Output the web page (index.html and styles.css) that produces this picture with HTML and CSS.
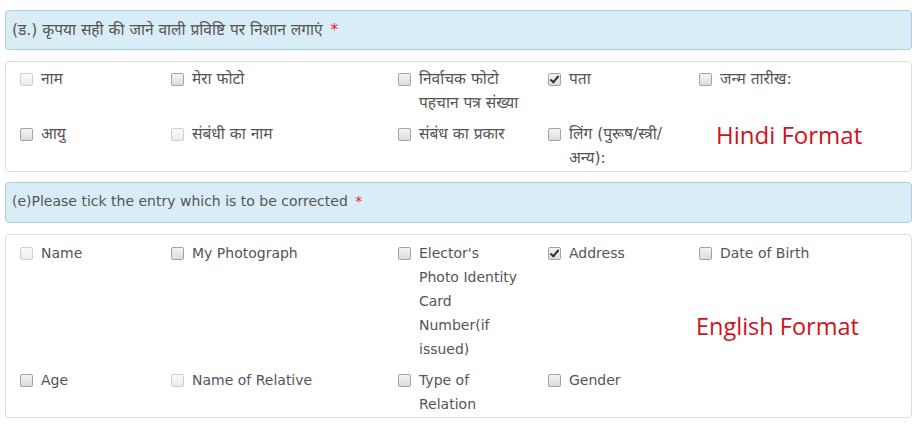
FILE: index.html
```html
<!DOCTYPE html>
<html lang="hi">

<head>
  <meta charset="UTF-8" />
  <meta name="viewport" content="width=device-width, initial-scale=1.0" />
  <title>प्रविष्टि सुधार</title>
  <link rel="stylesheet" href="styles.css">
</head>

<body>
  <div class="page">
    <div class="panel-heading">(ड.) कृपया सही की जाने वाली प्रविष्टि पर निशान लगाएं <span class="req">*</span></div>

    <div class="panel-body">
      <div class="grid">
        <label class="item"><span class="chk light"></span><span class="txt">नाम</span></label>
        <label class="item"><span class="chk"></span><span class="txt">मेरा फोटो</span></label>
        <label class="item narrow"><span class="chk"></span><span class="txt">निर्वाचक फोटो पहचान पत्र संख्या</span></label>
        <label class="item"><span class="chk on"></span><span class="txt">पता</span></label>
        <label class="item"><span class="chk"></span><span class="txt">जन्म तारीख:</span></label>

        <label class="item"><span class="chk"></span><span class="txt">आयु</span></label>
        <label class="item"><span class="chk light"></span><span class="txt">संबंधी का नाम</span></label>
        <label class="item"><span class="chk"></span><span class="txt">संबंध का प्रकार</span></label>
        <label class="item narrow"><span class="chk"></span><span class="txt">लिंग (पुरूष/स्त्री/ अन्य):</span></label>
      </div>
      <div class="note note-hi">Hindi Format</div>
    </div>

    <div class="panel-heading en">(e)Please tick the entry which is to be corrected <span class="req">*</span></div>

    <div class="panel-body en">
      <div class="grid">
        <label class="item"><span class="chk light"></span><span class="txt">Name</span></label>
        <label class="item"><span class="chk"></span><span class="txt">My Photograph</span></label>
        <label class="item narrow"><span class="chk"></span><span class="txt">Elector's Photo Identity Card Number(if issued)</span></label>
        <label class="item"><span class="chk on"></span><span class="txt">Address</span></label>
        <label class="item"><span class="chk"></span><span class="txt">Date of Birth</span></label>

        <label class="item"><span class="chk"></span><span class="txt">Age</span></label>
        <label class="item"><span class="chk light"></span><span class="txt">Name of Relative</span></label>
        <label class="item narrow"><span class="chk"></span><span class="txt">Type of Relation</span></label>
        <label class="item"><span class="chk"></span><span class="txt">Gender</span></label>
      </div>
      <div class="note note-en">English Format</div>
    </div>
  </div>
</body>

</html>
```

FILE: styles.css
```css
body {
  margin: 0;
  padding: 0;
  background: #fff;
  font-family: "DejaVu Sans", "Noto Sans Devanagari", "Noto Sans", sans-serif;
  font-size: 14px;
  color: #555;
}

.page {
  padding: 10px 7px 0 5px;
}

.panel-heading {
  height: 38px;
  line-height: 38px;
  padding: 0 6px;
  background: #d9edf7;
  border: 1px solid #a9d1e6;
  border-radius: 4px;
  font-size: 15.5px;
  color: #555;
  white-space: nowrap;
}

.panel-heading.en {
  height: 39px;
  line-height: 37px;
  font-size: 14px;
}

.req {
  color: #e4202a;
  margin-left: 3px;
}

.panel-body {
  position: relative;
  margin: 11px 0 10px;
  padding: 5px 15px 1px 14px;
  border: 1px solid #ddd;
  border-radius: 4px;
  height: 103px;
}

.panel-body.en {
  height: 175px;
  padding-top: 6px;
}

.grid {
  display: grid;
  grid-template-columns: 151px 227px 150px 151px 1fr;
  row-gap: 7px;
}

.item {
  display: flex;
  align-items: flex-start;
  line-height: 24px;
}

.panel-body:not(.en) .item {
  font-size: 15.5px;
}

.item.narrow .txt {
  max-width: 103px;
}

.chk {
  flex: none;
  width: 11px;
  height: 11px;
  margin: 6px 8px 0 0;
  border: 1px solid #a3a3a3;
  border-radius: 2px;
  background: linear-gradient(#f4f4f4, #dcdcdc);
  position: relative;
}

.chk.light {
  border-color: #cfcfcf;
  background: linear-gradient(#fafafa, #ececec);
}

.chk.on::after {
  content: "";
  position: absolute;
  left: 3px;
  top: 0;
  width: 3px;
  height: 7px;
  border: solid #333;
  border-width: 0 2px 2px 0;
  transform: rotate(40deg);
}

.note {
  position: absolute;
  color: #d0121b;
  font-family: "Open Sans", "Noto Sans", sans-serif;
  font-size: 24px;
}

.note-hi {
  left: 710px;
  top: 56px;
}

.note-en {
  left: 690px;
  top: 75px;
  font-size: 23.5px;
}
```
